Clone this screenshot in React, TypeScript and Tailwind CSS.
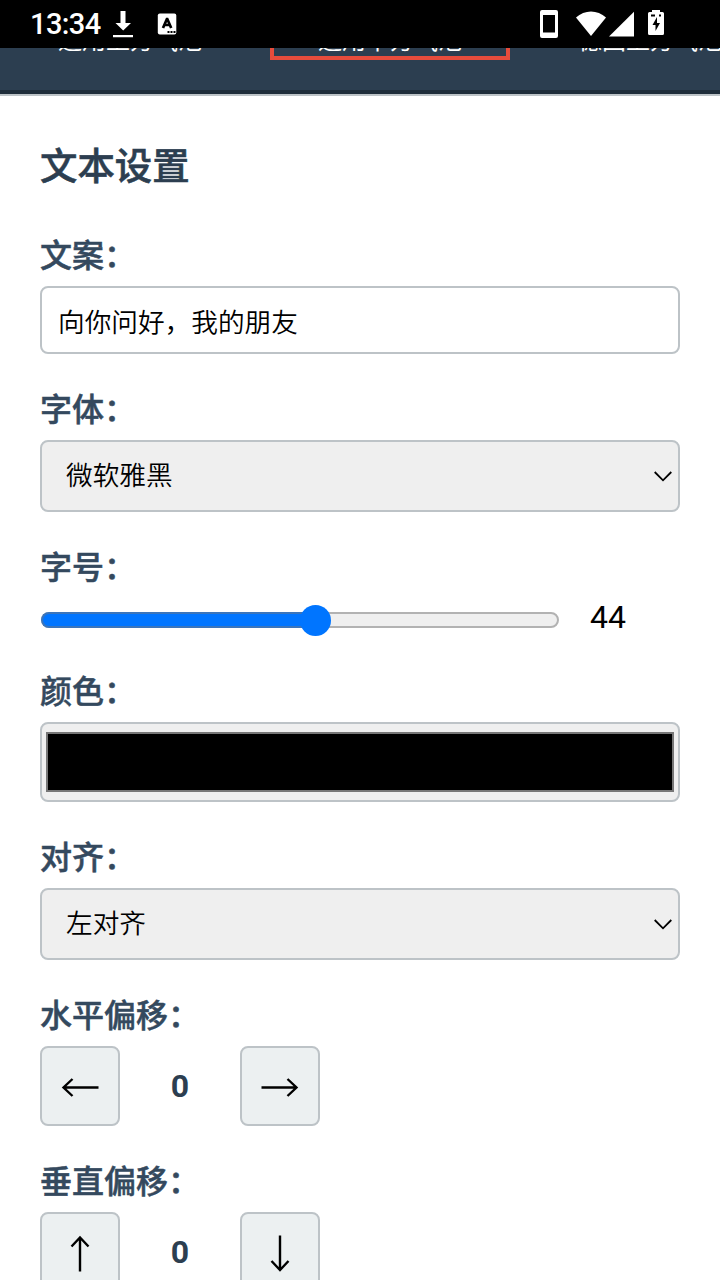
import type { ReactNode } from 'react';

const bubbles = [
  { name: '通用上方气泡', active: false },
  { name: '通用下方气泡', active: true },
  { name: '德国上方气泡', active: false },
];

function StatusBar() {
  return (
    <header className="relative z-10 flex h-12 shrink-0 items-center bg-black pl-[30px] text-white">
      <span className="w-[71px] whitespace-nowrap font-['Roboto',sans-serif] text-[29px] font-medium leading-[46px] tracking-[-0.6px]">13:34</span>
      <svg className="ml-3 h-12 w-5" viewBox="0 0 20 48" fill="currentColor">
        <path d="M7.5 11h5v12h5.5L10.2 30.5 2.5 23h5zM0 35h20v2.3H0z" />
      </svg>
      <svg className="ml-6 h-12 w-5" viewBox="0 0 20 48">
        <rect x="0.8" y="13.5" width="18.5" height="21" rx="2" fill="white" />
        <path d="m6 28 3.9-9h.4l3.9 9M7.5 25h5.2" fill="none" stroke="black" strokeWidth="2.7" />
        <path d="M10.5 31h2v2h-2zM13.5 31h2v2h-2zM16.5 31h2v2h-2z" fill="black" />
      </svg>
      <svg className="ml-[362px] h-12 w-[130px]" viewBox="539 0 130 48" fill="white">
        <path fillRule="evenodd" d="M542 10h14a2 2 0 0 1 2 2v24a2 2 0 0 1-2 2h-14a2 2 0 0 1-2-2V12a2 2 0 0 1 2-2zm1 5v17.5h12V15z" />
        <path d="M576 17.5C584.5 9.5 597.5 9.5 606 17.5L591 36z" />
        <path d="M634 11.8V36.5H609z" />
        <path d="M652 10h8v2h2.5q1.5 0 1.5 1.5v20q0 1.5-1.5 1.5h-13q-1.5 0-1.5-1.5v-20q0-1.5 1.5-1.5h2.5z" />
        <path d="m657 17-4.5 8h3v6l4.5-8h-3zM651 14.5h4v2h-4zM659 14.5h2v2h-2z" fill="black" />
      </svg>
    </header>
  );
}

function Field({ label, children }: { label: string; children: ReactNode }) {
  return (
    <div className="mb-[30px]">
      <div className="mb-1.5 h-[50px] text-[32px] font-medium leading-[52px] text-[#34495e] [-webkit-text-stroke:0.5px_#34495e]">
        {label}
      </div>
      {children}
    </div>
  );
}

function SelectBox({ value }: { value: string }) {
  return (
    <div className="flex h-[72px] items-center justify-between rounded-lg border-2 border-[#bdc3c7] bg-[#efefef] pl-6 pr-[5px]">
      <span className="text-[26.66px] font-[350] leading-[68px]">{value}</span>
      <svg className="h-5 w-5" viewBox="0 0 20 20" fill="none" stroke="black" strokeWidth="1.8">
        <path d="m1.7 6 8.3 8.3L18.3 6" />
      </svg>
    </div>
  );
}

function Arrow({ path }: { path: string }) {
  return (
    <button className="flex h-20 w-20 items-center justify-center rounded-lg border-2 border-[#bdc3c7] bg-[#ecf0f1]">
      <svg className="h-10 w-10" viewBox="0 0 40 40" fill="none" stroke="black" strokeWidth="2.4">
        <path d={path} />
      </svg>
    </button>
  );
}

function Offset({ label, minus, plus }: { label: string; minus: string; plus: string }) {
  return (
    <Field label={label}>
      <div className="flex w-[280px] items-center justify-between">
        <Arrow path={minus} />
        <span className="text-[32px] font-bold leading-10 text-[#2c3e50]">0</span>
        <Arrow path={plus} />
      </div>
    </Field>
  );
}

export default function App() {
  return (
    <div className="flex h-[1280px] w-[720px] flex-col overflow-hidden bg-white font-['Roboto','Noto_Sans_CJK_SC',sans-serif] text-black">
      <StatusBar />

      {/* 气泡列表 */}
      <nav className="flex h-12 shrink-0 items-start gap-5 overflow-hidden border-b-2 border-[#bdc3c7] bg-[#2c3e50] pl-2.5 shadow-[inset_0_-4px_0_#1f2d3a]">
        {bubbles.map((b) => (
          <div
            key={b.name}
            className={
              b.active
                ? '-mt-12 flex h-[60px] w-60 shrink-0 items-end justify-center border-4 border-[#e74c3c] text-2xl leading-[30px] text-white'
                : '-mt-12 flex h-[60px] w-60 shrink-0 items-end justify-center border-4 border-transparent text-2xl leading-[30px] text-white'
            }
          >
            {b.name}
          </div>
        ))}
      </nav>

      {/* 文本设置 */}
      <main className="px-10 pt-[45px]">
        <h2 className="mb-[39px] h-[50px] text-[37.4px] font-medium leading-[52px] text-[#2c3e50] [-webkit-text-stroke:0.6px_#2c3e50]">
          文本设置
        </h2>

        <Field label="文案：">
          <div className="flex h-[68px] items-center rounded-lg border-2 border-[#bdc3c7] bg-white px-4 pt-[7px] text-[26.66px] font-[350]">
            向你问好，我的朋友
          </div>
        </Field>

        <Field label="字体：">
          <SelectBox value="微软雅黑" />
        </Field>

        <Field label="字号：">
          <div className="flex h-[38px] items-center">
            <div className="ml-px mt-1.5 flex h-4 w-[518px] items-center rounded-full border-2 border-[#b2b2b2] bg-[#efefef]">
              <div className="-ml-0.5 h-4 w-[275px] rounded-l-full border-2 border-r-0 border-[#3b75bb] bg-[#0075ff]" />
              <div className="-ml-4 h-[31px] w-[31px] shrink-0 rounded-full bg-[#0075ff]" />
            </div>
            <span className="ml-[31px] text-[32px] leading-[38px]">44</span>
          </div>
        </Field>

        <Field label="颜色：">
          <div className="h-20 rounded-lg border-2 border-[#bdc3c7] bg-[#efefef] px-1 py-2">
            <div className="h-[60px] border-2 border-[#777777] bg-black" />
          </div>
        </Field>

        <Field label="对齐：">
          <SelectBox value="左对齐" />
        </Field>

        <Offset
          label="水平偏移："
          minus="M38.5 21.5H3M12.5 13l-9 8.5 9 8.5"
          plus="M1.5 21.5H37M27.5 13l9 8.5-9 8.5"
        />
        <Offset
          label="垂直偏移："
          minus="M20 39.5V5M11.5 14.5l8.500-9 8.500 9"
          plus="M20 3.5V38M11.5 29l8.500 9 8.500-9"
        />
      </main>
    </div>
  );
}
